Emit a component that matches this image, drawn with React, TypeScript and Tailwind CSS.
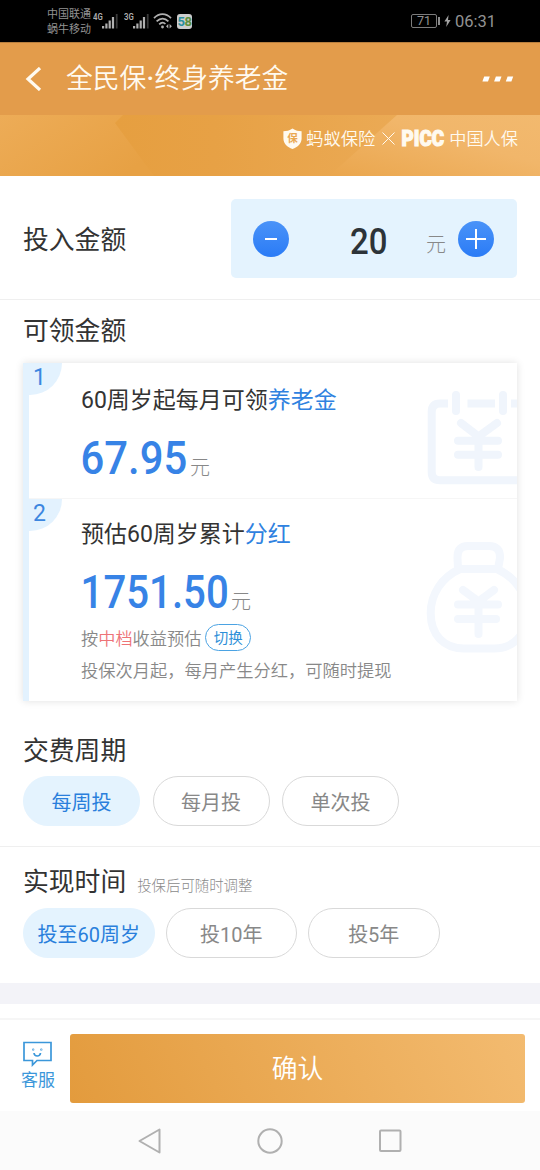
// 终身养老金投保页

import { useState } from 'react';
import type { ReactNode } from 'react';

const PERIODS = ['每周投', '每月投', '单次投'];
const DURATIONS = ['投至60周岁', '投10年', '投5年'];

/** 顶部系统状态栏 */
function StatusBar() {
  return (
    <div className="flex h-[42px] items-center bg-black pl-[47px] pr-[44px] text-[#929292]">
      <div className="w-[44px] pt-[2px] text-[11px] leading-[15px] whitespace-nowrap">
        <div>中国联通</div>
        <div>蜗牛移动</div>
      </div>
      <Signal label="4G" />
      <Signal label="3G" />
      <svg className="h-[18px] w-[20px]" viewBox="0 0 20 18" fill="none" stroke="#b0b0b0" strokeWidth="1.7">
        <path d="M1 6.2C6 0.8 13 0.8 18 6.2" />
        <path d="M3.6 9.4C7.4 5.6 11.8 5.6 15.4 9.4" />
        <path d="M6.2 12.4C8.6 10 10.6 10 12.4 12" />
        <circle cx="9.5" cy="15" r="1.4" fill="#b0b0b0" stroke="none" />
        <path d="M15.3 12L13 14.2l2.3 2.2zM16.6 12l2.3 2.2-2.3 2.2z" fill="#b0b0b0" stroke="none" />
      </svg>
      <div className="ml-[4px] flex h-[15px] w-[15px] items-center justify-center rounded-[3px] bg-[#cdcdcd] text-[13px] leading-none font-bold tracking-[-0.5px]">
        <span className="text-[#2a8f9e]">5</span>
        <span className="text-[#5c8f3c]">8</span>
      </div>
      <div className="ml-auto flex items-center">
        <div className="flex h-[14px] w-[26px] items-center justify-center rounded-[2px] border border-[#7c7c7c] text-[12.5px] leading-none">71</div>
        <div className="ml-px h-[8px] w-[2px] bg-[#8c8c8c]" />
        <svg className="ml-[4px] h-[12px] w-[7px]" viewBox="0 0 7 12" fill="#a3a3a3">
          <path d="M4.6 0L0.4 6.6H3L2.2 12 6.6 5H4z" />
        </svg>
        <span className="mt-[2px] ml-[4px] text-[16.5px] leading-[20px]">06:31</span>
      </div>
    </div>
  );
}

function Signal({ label }: { label: string }) {
  return (
    <svg className="ml-[2px] h-[18px] w-[29px] shrink-0" viewBox="0 0 29 18" fill="#b0b0b0">
      <g transform="scale(0.82 1)">
        <text x="0" y="8" fontFamily="Roboto" fontSize="9.5" fontWeight="600">{label}</text>
      </g>
      <rect x="9" y="14" width="2.2" height="2.5" />
      <rect x="12.3" y="11.5" width="2.2" height="5" />
      <rect x="15.6" y="8.5" width="2.2" height="8" />
      <rect x="18.9" y="5" width="2.2" height="11.5" />
      <rect x="22.8" y="2" width="1.8" height="14.5" fill="#3a3a3a" />
    </svg>
  );
}

function Header() {
  return (
    <header className="flex h-[73px] items-center border-t border-[#b87f3e] bg-[#e39c4b] pr-[26px] pl-[25px] text-[#fffaf0]">
      <svg className="h-[24px] w-[17px]" viewBox="0 0 17 24" fill="none" stroke="currentColor" strokeWidth="3.2">
        <path d="M15 1L3 12l12 11" />
      </svg>
      <h1 className="ml-[24px] flex text-[26.8px] leading-[36px] font-[350] whitespace-nowrap">
        <span>全民保</span>
        <span className="w-[8px] text-center font-['Roboto'] font-medium">·</span>
        <span>终身养老金</span>
      </h1>
      <svg className="ml-auto h-[6px] w-[32px]" viewBox="0 0 32 6" fill="#fff">
        <path d="M2.2 0.5h5.6L6 5.5H0.4zM13.9 0.5h5.6l-1.8 5h-5.6zM25.6 0.5h5.6l-1.8 5h-5.6z" />
      </svg>
    </header>
  );
}

/** 品牌横幅 */
function Banner() {
  return (
    <div className="relative flex h-[61px] items-start justify-end overflow-hidden bg-[#e8a145] pt-[11px] pr-[22px] text-[#fffaf0]">
      <svg className="absolute inset-0 h-full w-full" viewBox="0 0 540 61" preserveAspectRatio="none">
        <defs>
          <linearGradient id="left" x1="0" y1="0" x2="1" y2="0.6">
            <stop offset="0" stopColor="#edac57" />
            <stop offset="1" stopColor="#e7a144" />
          </linearGradient>
          <linearGradient id="mid" x1="0" x2="1">
            <stop offset="0" stopColor="#e69f40" />
            <stop offset="0.35" stopColor="#e7a145" />
            <stop offset="1" stopColor="#ebaa55" />
          </linearGradient>
          <linearGradient id="right" x1="0" y1="1" x2="1" y2="0">
            <stop offset="0" stopColor="#eaa64d" />
            <stop offset="0.6" stopColor="#f1b66a" />
            <stop offset="1" stopColor="#f2b96e" />
          </linearGradient>
        </defs>
        <path d="M0 0H160V61H0z" fill="url(#left)" />
        <path d="M123 0H400V61H154L115 8z" fill="url(#mid)" />
        <path d="M397 0H540V61H329z" fill="url(#right)" />
      </svg>
      <div className="relative flex h-[24px] items-center whitespace-nowrap">
        <svg className="h-[21px] w-[19px]" viewBox="0 0 19 21">
          <path d="M9.5 0.5C12.5 2.6 15.5 3.2 18.6 3.2V10.5C18.6 15.6 14.8 19 9.5 21 4.2 19 0.4 15.6 0.4 10.5V3.2C3.5 3.2 6.5 2.6 9.5 0.5z" fill="#fffaf0" />
          <text x="9.5" y="14" fontSize="10.5" fontWeight="700" textAnchor="middle" fill="#e9a750">保</text>
        </svg>
        <span className="mt-[2px] ml-[4px] text-[17.3px] leading-[24px] font-[350]">蚂蚁保险</span>
        <svg className="ml-[7px] h-[13px] w-[13px]" viewBox="0 0 13 13" stroke="#fffaf0" strokeWidth="1">
          <path d="M0.5 0.5l12 12M12.5 0.5l-12 12" />
        </svg>
        <svg className="ml-[6px] h-[18px] w-[43px] overflow-visible" viewBox="0 0 43 18" fill="#fffaf0" stroke="#fffaf0" strokeWidth="1.2">
          <text x="0.5" y="16.8" fontFamily="Roboto" fontSize="21.5" fontWeight="900" textLength="42.5" lengthAdjust="spacingAndGlyphs">PICC</text>
        </svg>
        <span className="mt-[2px] ml-[5px] text-[17.2px] leading-[24px] font-[350]">中国人保</span>
      </div>
    </div>
  );
}

function RoundButton({ label, onClick, children }: { label: string; onClick: () => void; children: ReactNode }) {
  return (
    <button
      aria-label={label}
      onClick={onClick}
      className="h-[36px] w-[36px] shrink-0 rounded-full bg-linear-to-b from-[#4a93f8] to-[#2a7bf6]"
    >
      <svg className="h-full w-full" viewBox="0 0 36 36" stroke="#fff" strokeWidth="2">
        {children}
      </svg>
    </button>
  );
}

/** DIN 风格的窄体数字，后接单位 */
function Money({ value, width, scale }: { value: string; width: number; scale: number }) {
  return (
    <div className="flex items-end">
      <svg className="h-[36px] overflow-visible" width={width} fill="#3783e6">
        <g transform={`scale(${scale} 1)`}>
          <text x="-0.5" y="34.5" fontFamily="Roboto" fontSize="47" fontWeight="500">{value}</text>
        </g>
      </svg>
      <span className="-mb-[3px] ml-[3px] text-[20px] leading-[20px] font-light text-[#888]">元</span>
    </div>
  );
}

function CardIndex({ children }: { children: ReactNode }) {
  return (
    <div className="absolute top-0 left-0 h-[32px] w-[33px] rounded-br-[32px] bg-[#e3f2fe] pl-[4px] text-[23px] leading-[29px] text-[#3c86e0]">
      {children}
    </div>
  );
}

function Pills({ items, value, onChange, gap, size }: { items: string[]; value: string; onChange: (v: string) => void; gap: string; size: string }) {
  return (
    <div className={`flex ${gap}`}>
      {items.map((item) => (
        <button
          key={item}
          onClick={() => onChange(item)}
          className={`h-[50px] shrink-0 rounded-full border pt-[3px] text-[20px] leading-[28px] whitespace-nowrap ${size} ${
            item === value ? 'border-[#e4f3fe] bg-[#e4f3fe] text-[#2a7fdc]' : 'border-[#d9d9d9] bg-white text-[#888]'
          }`}
        >
          {item}
        </button>
      ))}
    </div>
  );
}

export default function App() {
  const [amount, setAmount] = useState(20);
  const [period, setPeriod] = useState(PERIODS[0]);
  const [duration, setDuration] = useState(DURATIONS[0]);

  return (
    <div className="flex h-[1170px] w-[540px] flex-col overflow-hidden bg-white font-['Roboto','Noto_Sans_CJK_SC',sans-serif] text-[#333]">
      <StatusBar />
      <Header />
      <Banner />

      {/* 投入金额 */}
      <section className="flex h-[124px] items-center justify-between border-b border-[#efefef] px-[23px] pt-[2px]">
        <h2 className="pt-[2px] text-[25.8px] leading-[36px]">投入金额</h2>
        <div className="flex h-[79px] w-[286px] items-center rounded-[5px] bg-[#e4f3fe] pr-[23px] pl-[22px]">
          <RoundButton label="减少" onClick={() => setAmount(Math.max(10, amount - 10))}>
            <path d="M12 18h12" />
          </RoundButton>
          <svg className="ml-[61px] h-[48px] w-[40px] shrink-0 overflow-visible" fill="#2d3338">
            <g transform="scale(0.89 1)">
              <text x="0" y="39" fontFamily="Roboto" fontSize="37" fontWeight="500">{amount}</text>
            </g>
          </svg>
          <span className="mt-[12px] ml-auto text-[20px] leading-[28px] font-light text-[#888]">元</span>
          <div className="ml-[12px] flex">
            <RoundButton label="增加" onClick={() => setAmount(amount + 10)}>
              <path d="M8 18h20M18 8v20" />
            </RoundButton>
          </div>
        </div>
      </section>

      {/* 可领金额 */}
      <section className="h-[424px] px-[23px] pt-[13px]">
        <h2 className="text-[25.8px] leading-[36px]">可领金额</h2>
        <div className="mt-[14px] h-[338px] bg-white shadow-[0_0_8px_rgba(0,0,0,0.12)]">
          <div className="relative h-[136px] border-b border-b-[#f6f6f6] pt-[22px] pl-[58px]">
            <div className="absolute top-0 left-0 h-[136px] w-[6px] bg-[#e3f2fe]" />
            <div className="absolute top-0 left-[6px]"><CardIndex>1</CardIndex></div>
            <svg className="absolute top-0 right-0 h-[135px] w-[91px]" viewBox="426 363 91 135" fill="none" stroke="#f0f5fc" strokeWidth="8" strokeLinecap="round" strokeLinejoin="round">
              <path d="M448 403.5H440Q431.7 403.5 431.7 412V472Q431.7 480.3 440 480.3H530M467.5 403.5H495M511 403.5H530" strokeLinecap="butt" />
              <path d="M456 395v16M503 395v16M461 423l17.5 13.5L497 423M458 440.7h40M458 454.7h40M478.5 438v29" />
            </svg>
            <p className="relative text-[23px] leading-[32px]">60周岁起每月可领<span className="text-[#2f82e0]">养老金</span></p>
            <div className="mt-[22px]"><Money value="67.95" width={106} scale={0.89} /></div>
          </div>
          <div className="relative h-[202px] pt-[20px] pl-[58px]">
            <div className="absolute top-0 left-0 h-[202px] w-[6px] bg-[#e3f2fe]" />
            <div className="absolute top-0 left-[6px]"><CardIndex>2</CardIndex></div>
            <svg className="absolute top-0 right-0 h-[202px] w-[91px]" viewBox="426 499 91 202" fill="none" stroke="#f3f7fd" strokeWidth="8" strokeLinecap="round" strokeLinejoin="round">
              <path d="M458 569L457.5 558Q457 546 468 546H489Q500.5 546 500 558L498 569" />
              <path d="M460 569H497C515 577 527 594 527 613C527 635 513 648.5 494 648.5H464C444 648.5 430.7 635 430.7 613C430.7 594 442 577 460 569z" />
              <path d="M463 590l15.5 11.5L494 590M458 604.5h40M458 619h38M478.5 603v31" />
            </svg>
            <p className="relative text-[23px] leading-[32px]">预估60周岁累计<span className="text-[#2f82e0]">分红</span></p>
            <div className="mt-[22px]"><Money value="1751.50" width={147} scale={0.855} /></div>
            <div className="mt-[15px] flex h-[27px] items-center text-[17.2px] leading-[26px] font-[350] text-[#888]">
              <span className="pt-[2px]">按<span className="text-[#ee7377]">中档</span>收益预估</span>
              <button className="ml-[4px] flex h-[27px] w-[46px] items-center justify-center rounded-full border border-[#4ba3e3] pt-[2px] text-[14.5px] leading-[20px] font-normal text-[#2d8fd8]">切换</button>
            </div>
            <p className="mt-[7px] text-[17.25px] leading-[26px] font-[350] whitespace-nowrap text-[#888]">投保次月起，每月产生分红，可随时提现</p>
          </div>
        </div>
      </section>

      {/* 交费周期 */}
      <section className="h-[123px] border-b border-[#efefef] px-[23px] pt-[9px]">
        <h2 className="mb-[7px] text-[25.8px] leading-[36px]">交费周期</h2>
        <Pills items={PERIODS} value={period} onChange={setPeriod} gap="gap-[12.5px]" size="w-[117px]" />
      </section>

      {/* 实现时间 */}
      <section className="h-[136px] px-[23px] pt-[17px]">
        <div className="mb-[8px] flex items-baseline">
          <h2 className="text-[25.8px] leading-[36px]">实现时间</h2>
          <span className="ml-[11px] text-[14.4px] leading-[20px] font-light text-[#8a8a8a]">投保后可随时调整</span>
        </div>
        <Pills items={DURATIONS} value={duration} onChange={setDuration} gap="gap-[11px]" size="w-[131.5px]" />
      </section>

      <div className="h-[21px] bg-[#f3f3f8]" />
      <div className="h-[14px]" />

      {/* 底部操作栏 */}
      <footer className="flex h-[93px] border-t-2 border-[#f6f6f6] pt-[14px] pr-[15px]">
        <button className="flex w-[70px] flex-col items-center pt-[7px] pl-[6px] text-[#3b97da]">
          <svg className="-ml-[2px] h-[26px] w-[29px] shrink-0" viewBox="0 0 29 26" fill="none" stroke="currentColor" strokeWidth="1.7">
            <path d="M1 1.5H28V19.5H14L9.5 24V19.5H1z" />
            <path d="M11 12C11.500 16 17 16 17.500 12" />
            <circle cx="10.2" cy="8.7" r="0.3" />
            <circle cx="18.3" cy="8.7" r="0.3" />
          </svg>
          <span className="mt-px text-[17px] leading-[24px]">客服</span>
        </button>
        <button className="h-[69px] flex-1 rounded-[3px] bg-linear-[65deg] from-[#e39b3d] to-[#f3bb70] pt-px text-[25.8px] leading-[36px] font-[350] text-white">
          确认
        </button>
      </footer>

      {/* 系统导航键 */}
      <nav className="flex flex-1 items-center justify-center gap-[94px] bg-[#fbfbfb]">
        <svg className="h-[26px] w-[26px]" viewBox="0 0 26 26" fill="none" stroke="#b0b0b0" strokeWidth="2" strokeLinejoin="round">
          <path d="M22.5 1.5V24.5L2.5 13z" />
        </svg>
        <svg className="h-[26px] w-[26px]" viewBox="0 0 26 26" fill="none" stroke="#b0b0b0" strokeWidth="2">
          <circle cx="13" cy="13" r="11.7" />
        </svg>
        <svg className="h-[26px] w-[26px]" viewBox="0 0 26 26" fill="none" stroke="#b0b0b0" strokeWidth="2">
          <rect x="3" y="2.5" width="20.5" height="20.5" rx="1" />
        </svg>
      </nav>
    </div>
  );
}
